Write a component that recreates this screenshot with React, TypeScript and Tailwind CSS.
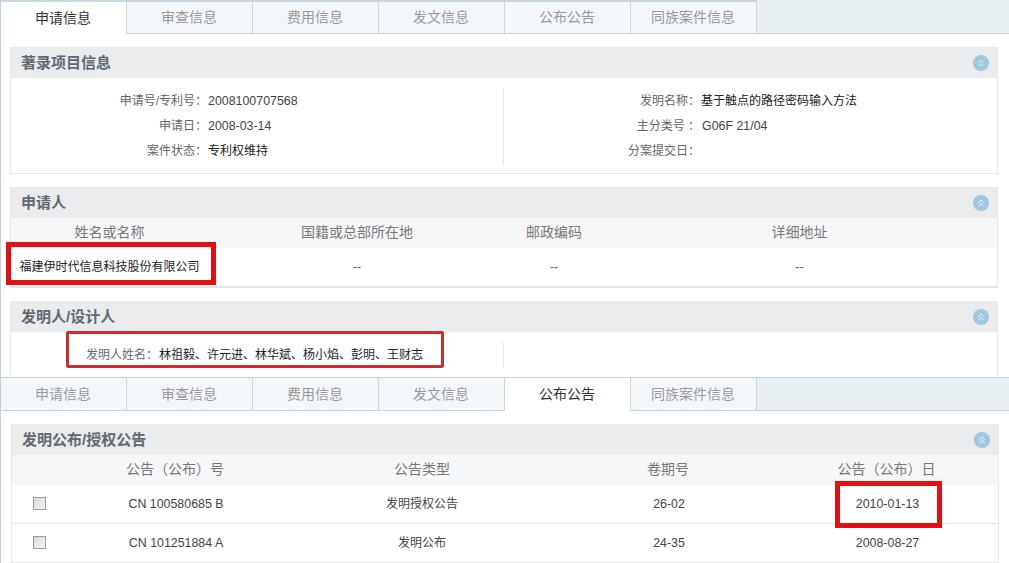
import type { ReactNode } from "react";
import { ChevronsUp } from "lucide-react";

const FONT = "font-['Liberation_Sans','Noto_Sans_CJK_SC',sans-serif]";

const TABS = ["申请信息", "审查信息", "费用信息", "发文信息", "公布公告", "同族案件信息"];

const applicantCols = "grid grid-cols-[197px_298px_96px_1fr]";
const noticeCols = "grid grid-cols-[55px_216px_278px_214px_1fr]";

function TabStrip({ active, top }: { active: number; top?: boolean }) {
  return (
    <div className={`flex h-[34px] border-b border-[#c8d0d5] bg-[#e9f0f4] ${top ? "" : "border-t"}`}>
      <div className="w-px shrink-0 bg-[#c5d0d6]" />
      {TABS.map((tab, i) => (
        <div
          key={tab}
          className={`flex w-[126px] shrink-0 items-center justify-center border-r border-[#cfd6da] pr-px text-[14px] ${
            i === active ? "mb-[-1px] bg-white text-[#333]" : "bg-[#f3f7f9] text-[#999]"
          } ${top ? "border-t-2 border-t-[#c9d6de]" : ""}`}
        >
          {tab}
        </div>
      ))}
    </div>
  );
}

function Section({ title, children }: { title: string; children: ReactNode }) {
  return (
    <section className="border-x border-[#e6e9eb]">
      <div className="flex h-[31px] items-center justify-between bg-[#e9ebed] pl-[10px] pr-[8px]">
        <h2 className="pt-px text-[15px] font-bold text-[#5f6a70]">{title}</h2>
        <span className="flex h-4 w-4 items-center justify-center rounded-full bg-[#9fc7de]">
          <ChevronsUp className="h-3 w-3 text-white" strokeWidth={1.6} />
        </span>
      </div>
      {children}
    </section>
  );
}

function InfoRow({ label, value, gap = "ml-px", dark }: { label: string; value?: string; gap?: string; dark?: boolean }) {
  return (
    <div className="flex items-center text-[12px]">
      <span className="w-[196px] shrink-0 text-right text-[#666]">{label}：</span>
      <span className={`${gap} ${dark ? "text-[#222]" : "text-[12.4px] text-[#444]"}`}>{value}</span>
    </div>
  );
}

function NoticeRow({ number, type, volume, date }: { number: string; type: string; volume: string; date: string }) {
  return (
    <div className={`${noticeCols} h-[39px] items-center border-b border-[#e3e7ea] text-center text-[12.4px] text-[#444]`}>
      <div className="flex justify-center pb-[2px]">
        <input
          type="checkbox"
          readOnly
          className="h-[13px] w-[13px] appearance-none border border-[#9a9a9a] bg-linear-to-br from-[#d8d8d8] to-[#f6f6f6]"
        />
      </div>
      <div className="pl-[2px]">{number}</div>
      <div className="text-[12px]">{type}</div>
      <div className="pl-[2px]">{volume}</div>
      <div className="pl-[2px]">{date}</div>
    </div>
  );
}

export default function App() {
  return (
    <div className={`relative h-[563px] w-[1009px] overflow-hidden bg-white ${FONT}`}>
      <div className="h-[377px] overflow-hidden">
        <TabStrip active={0} top />
        <div className="flex flex-col gap-[13px] border-l border-[#c5d0d6] pl-[9px] pr-[11px] pt-[13px]">
          <Section title="著录项目信息">
            <div className="grid h-[96px] grid-cols-[493px_1fr] border-b border-[#e6e9eb] pt-[10px]">
              <div className="flex h-[77px] flex-col justify-between border-r border-[#e6e9eb] pb-[5px] pt-[4px]">
                <InfoRow label="申请号/专利号" value="2008100707568" />
                <InfoRow label="申请日" value="2008-03-14" />
                <InfoRow label="案件状态" value="专利权维持" dark />
              </div>
              <div className="flex h-[77px] flex-col justify-between pb-[5px] pt-[4px]">
                <InfoRow label="发明名称" value="基于触点的路径密码输入方法" dark />
                <InfoRow label="主分类号 " value="G06F 21/04" gap="ml-[2px]" />
                <InfoRow label="分案提交日" />
              </div>
            </div>
          </Section>

          <Section title="申请人">
            <div className={`${applicantCols} h-[30px] items-center bg-[#f5f7f9] pb-px text-center text-[14px] text-[#777]`}>
              <div>姓名或名称</div>
              <div>国籍或总部所在地</div>
              <div>邮政编码</div>
              <div>详细地址</div>
            </div>
            <div className={`${applicantCols} h-[40px] items-center border-b-2 border-[#e3e6e8] text-center text-[12px] text-[#555]`}>
              <div className="text-[#222]">福建伊时代信息科技股份有限公司</div>
              <div>--</div>
              <div>--</div>
              <div>--</div>
            </div>
          </Section>

          <Section title="发明人/设计人">
            <div className="grid h-[60px] grid-cols-[493px_1fr] pt-[10px]">
              <div className="flex h-[26px] items-center border-r border-[#e6e9eb] pl-[75px] text-[12px]">
                <span className="text-[#666]">发明人姓名：</span>
                <span className="ml-px text-[#222]">林祖毅、许元进、林华斌、杨小焰、彭明、王财志</span>
              </div>
            </div>
          </Section>
        </div>
      </div>

      <div className="h-[186px] overflow-hidden">
        <TabStrip active={4} />
        <div className="border-l border-[#c5d0d6] pl-[10px] pr-[10px] pt-[13px]">
          <Section title="发明公布/授权公告">
            <div className={`${noticeCols} h-[30px] items-center bg-[#f5f7f9] pb-px text-center text-[14px] text-[#777]`}>
              <div />
              <div>公告（公布）号</div>
              <div>公告类型</div>
              <div>卷期号</div>
              <div>公告（公布）日</div>
            </div>
            <NoticeRow number="CN 100580685 B" type="发明授权公告" volume="26-02" date="2010-01-13" />
            <NoticeRow number="CN 101251884 A" type="发明公布" volume="24-35" date="2008-08-27" />
          </Section>
        </div>
      </div>

      {/* red annotation boxes drawn over the screenshots */}
      <div className="pointer-events-none absolute left-[6px] top-[242px] h-[43px] w-[210px] border-[5px] border-[#e30f15]" />
      <div className="pointer-events-none absolute left-[66px] top-[331px] h-[37px] w-[378px] rounded-[2px] border-[3px] border-[#c9302c]" />
      <div className="pointer-events-none absolute left-[835px] top-[481px] h-[47px] w-[107px] border-[5px] border-[#e30f15]" />
    </div>
  );
}
